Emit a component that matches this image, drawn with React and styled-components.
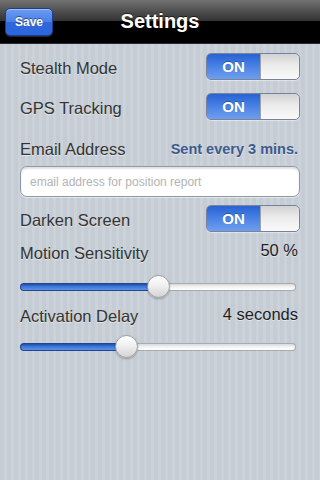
import React from 'react';
import styled, { createGlobalStyle } from 'styled-components';

const Global = createGlobalStyle`
  html, body { margin: 0; padding: 0; }
  body {
    width: 320px;
    height: 480px;
    overflow: hidden;
    font-family: "Liberation Sans", Arial, Helvetica, sans-serif;
  }
`;

const Screen = styled.div`
  width: 320px;
  height: 480px;
  display: flex;
  flex-direction: column;
  background: repeating-linear-gradient(
    90deg,
    #c5ccd4 0px,
    #c5ccd4 4px,
    #cbd2d9 4px,
    #cbd2d9 7px
  );
`;

const NavBar = styled.div`
  height: 44px;
  box-sizing: border-box;
  padding: 0 5px;
  display: grid;
  grid-template-columns: 1fr auto 1fr;
  align-items: center;
  background: linear-gradient(#727272 0%, #4a4a4a 30%, #333 49%, #000 50%, #000 100%);
  border-bottom: 1px solid #2a2a2a;
`;

const SaveButton = styled.button`
  justify-self: start;
  width: 48px;
  height: 28px;
  padding: 0;
  border: 1px solid #1c3f8c;
  border-radius: 5px;
  background: linear-gradient(#6d9cf0 0%, #4a80e8 48%, #2f66db 52%, #2c66de 100%);
  box-shadow: inset 0 1px 0 rgba(255, 255, 255, 0.35), 0 1px 0 rgba(255, 255, 255, 0.15);
  color: #fff;
  font-family: "Liberation Sans", Arial, sans-serif;
  font-size: 12px;
  font-weight: bold;
  text-shadow: 0 -1px 0 rgba(0, 0, 0, 0.45);
`;

const Title = styled.div`
  color: #fff;
  font-size: 20px;
  font-weight: bold;
  text-shadow: 0 -1px 0 rgba(0, 0, 0, 0.6);
`;

const Content = styled.div`
  padding: 9px 20px 0 20px;
  display: flex;
  flex-direction: column;
`;

const SwitchRow = styled.div`
  display: flex;
  justify-content: space-between;
  align-items: center;
  height: 27px;
  margin-top: ${(p) => p.$mt || 0}px;
`;

const Label = styled.div`
  font-size: 16.5px;
  line-height: 20px;
  color: #333;
  padding-top: ${(p) => p.$shift || 0}px;
  text-shadow: 0 1px 0 rgba(255, 255, 255, 0.5);
`;

const HeaderRow = styled.div`
  display: flex;
  justify-content: space-between;
  align-items: flex-start;
  height: 20px;
  margin-top: ${(p) => p.$mt || 0}px;
`;

const Value = styled.div`
  font-size: 16.5px;
  line-height: 20px;
  color: #1e1e1e;
  margin-top: ${(p) => -(p.$raise || 0)}px;
  margin-right: 2px;
  text-shadow: 0 1px 0 rgba(255, 255, 255, 0.5);
`;

const Note = styled.div`
  font-size: 14.5px;
  line-height: 20px;
  font-weight: bold;
  color: #3c5a8e;
  margin-right: 2px;
  text-shadow: 0 1px 0 rgba(255, 255, 255, 0.5);
`;

const SwitchBox = styled.div`
  width: 94px;
  height: 27px;
  box-sizing: border-box;
  display: flex;
  border: 1px solid #76839a;
  border-radius: 5px;
  overflow: hidden;
  box-shadow: 0 1px 0 rgba(255, 255, 255, 0.45);
`;

const SwitchOn = styled.div`
  flex: 0 0 53px;
  display: flex;
  align-items: center;
  justify-content: center;
  color: #fff;
  font-size: 15px;
  font-weight: bold;
  text-shadow: 0 -1px 0 rgba(0, 0, 0, 0.3);
  background: linear-gradient(#2a63cf 0%, #3b75e0 30%, #5a8ee8 70%, #6e9eee 100%);
`;

const SwitchKnob = styled.div`
  flex: 1;
  border-left: 1px solid #9aa1ab;
  border-radius: 0 4px 4px 0;
  background: linear-gradient(#d2d2d2 0%, #ececec 45%, #fafafa 100%);
`;

const EmailInput = styled.input`
  margin-top: ${(p) => p.$mt || 0}px;
  height: 31px;
  box-sizing: border-box;
  width: 280px;
  padding: 0 9px;
  border: 1px solid #8e98a6;
  border-radius: 7px;
  background: #fff;
  box-shadow: inset 0 2px 2px rgba(0, 0, 0, 0.12), 0 1px 0 rgba(255, 255, 255, 0.5);
  font-family: "Liberation Sans", Arial, sans-serif;
  font-size: 12px;
  color: #333;
  outline: none;
  &::placeholder {
    color: #b3b3b3;
  }
`;

const SliderWrap = styled.div`
  position: relative;
  width: 276px;
  height: 24px;
  margin-top: ${(p) => p.$mt || 0}px;
  display: flex;
  align-items: center;
`;

const Track = styled.div`
  width: 100%;
  height: 8px;
  display: flex;
`;

const TrackFill = styled.div`
  height: 100%;
  box-sizing: border-box;
  border: 1px solid #1f4690;
  border-right: none;
  border-radius: 4px 0 0 4px;
  background: linear-gradient(#1d4fa8 0%, #3f78d8 45%, #5f92e6 100%);
`;

const TrackRest = styled.div`
  flex: 1;
  height: 100%;
  box-sizing: border-box;
  border: 1px solid #a6abb2;
  border-left: none;
  border-radius: 0 4px 4px 0;
  background: linear-gradient(#d9d9d9 0%, #f4f4f4 50%, #ffffff 100%);
`;

const Thumb = styled.div`
  position: absolute;
  top: 0;
  width: 23px;
  height: 23px;
  box-sizing: border-box;
  border-radius: 50%;
  border: 1px solid #9b9fa6;
  background: linear-gradient(#ffffff 0%, #f0f0f0 45%, #d4d4d4 100%);
  box-shadow: 0 1px 2px rgba(0, 0, 0, 0.25);
`;

const THUMB = 23;

function Slider({ fraction, mt }) {
  const width = 276;
  const left = fraction * (width - THUMB);
  return (
    <SliderWrap $mt={mt}>
      <Track>
        <TrackFill style={{ width: `${left + THUMB / 2}px` }} />
        <TrackRest />
      </Track>
      <Thumb style={{ left: `${left}px` }} />
    </SliderWrap>
  );
}

function Toggle() {
  return (
    <SwitchBox>
      <SwitchOn>ON</SwitchOn>
      <SwitchKnob />
    </SwitchBox>
  );
}

export default function App() {
  return (
    <>
      <Global />
      <Screen>
        <NavBar>
          <SaveButton>Save</SaveButton>
          <Title>Settings</Title>
          <div />
        </NavBar>
        <Content>
          <SwitchRow>
            <Label $shift={3}>Stealth Mode</Label>
            <Toggle />
          </SwitchRow>
          <SwitchRow $mt={13}>
            <Label $shift={3}>GPS Tracking</Label>
            <Toggle />
          </SwitchRow>
          <HeaderRow $mt={18.5}>
            <Label>Email Address</Label>
            <Note>Sent every 3 mins.</Note>
          </HeaderRow>
          <EmailInput $mt={7.5} type="text" placeholder="email address for position report" />
          <SwitchRow $mt={8}>
            <Label $shift={3}>Darken Screen</Label>
            <Toggle />
          </SwitchRow>
          <HeaderRow $mt={11}>
            <Label>Motion Sensitivity</Label>
            <Value $raise={3}>50 %</Value>
          </HeaderRow>
          <Slider fraction={0.5} mt={11.5} />
          <HeaderRow $mt={7}>
            <Label>Activation Delay</Label>
            <Value $raise={2}>4 seconds</Value>
          </HeaderRow>
          <Slider fraction={0.377} mt={9.5} />
        </Content>
      </Screen>
    </>
  );
}
